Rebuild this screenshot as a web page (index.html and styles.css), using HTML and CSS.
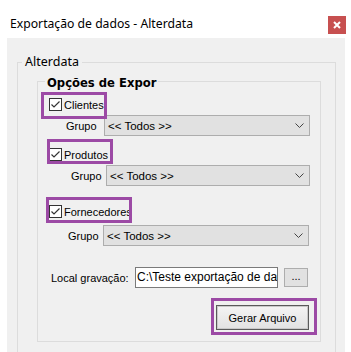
FILE: index.html
```html
<!DOCTYPE html>
<html lang="pt">
<head>
<meta charset="utf-8">
<title>Exportação de dados - Alterdata</title>
<link rel="stylesheet" href="styles.css">
</head>
<body>
<div class="titlebar">
  <span class="title">Exportação de dados - Alterdata</span>
  <span class="close"><svg width="8" height="8" viewBox="0 0 8 8"><path d="M1 1L7 7M7 1L1 7" stroke="#fff" stroke-width="2"/></svg></span>
</div>
<div class="window">
  <fieldset class="outer">
    <legend class="outer-legend">Alterdata</legend>
    <fieldset class="inner">
      <legend class="inner-legend">Opções de Expor</legend>

      <div class="check-row row-clientes">
        <label class="check"><span class="box"><svg width="13" height="13" viewBox="0 0 13 13"><rect x="0.5" y="0.5" width="12" height="12" fill="#fff" stroke="#333"/><polyline points="2.5,6.5 5,9 10.5,3.5" fill="none" stroke="#333" stroke-width="1.2"/></svg></span>Clientes</label>
        <span class="hl hl-clientes"></span>
      </div>
      <div class="grupo grupo-1">
        <span class="glabel">Grupo</span>
        <div class="select"><span>&lt;&lt; Todos &gt;&gt;</span><svg width="9" height="5" viewBox="0 0 9 5"><polyline points="0.5,0.5 4.5,4.5 8.5,0.5" fill="none" stroke="#444"/></svg></div>
      </div>

      <div class="check-row row-produtos">
        <label class="check"><span class="box"><svg width="13" height="13" viewBox="0 0 13 13"><rect x="0.5" y="0.5" width="12" height="12" fill="#fff" stroke="#333"/><polyline points="2.5,6.5 5,9 10.5,3.5" fill="none" stroke="#333" stroke-width="1.2"/></svg></span>Produtos</label>
        <span class="hl hl-produtos"></span>
      </div>
      <div class="grupo grupo-2">
        <span class="glabel">Grupo</span>
        <div class="select"><span>&lt;&lt; Todos &gt;&gt;</span><svg width="9" height="5" viewBox="0 0 9 5"><polyline points="0.5,0.5 4.5,4.5 8.5,0.5" fill="none" stroke="#444"/></svg></div>
      </div>

      <div class="check-row row-fornecedores">
        <label class="check"><span class="box"><svg width="13" height="13" viewBox="0 0 13 13"><rect x="0.5" y="0.5" width="12" height="12" fill="#fff" stroke="#333"/><polyline points="2.5,6.5 5,9 10.5,3.5" fill="none" stroke="#333" stroke-width="1.2"/></svg></span>Fornecedores</label>
        <span class="hl hl-fornecedores"></span>
      </div>
      <div class="grupo grupo-3">
        <span class="glabel">Grupo</span>
        <div class="select"><span>&lt;&lt; Todos &gt;&gt;</span><svg width="9" height="5" viewBox="0 0 9 5"><polyline points="0.5,0.5 4.5,4.5 8.5,0.5" fill="none" stroke="#444"/></svg></div>
      </div>

      <div class="local">
        <span class="local-label">Local gravação:</span>
        <div class="path-input">C:\Teste exportação de dados</div>
        <div class="dots">...</div>
      </div>

      <div class="actions">
        <div class="btn-wrap">
          <button class="btn">Gerar Arquivo</button>
          <span class="hl hl-btn"></span>
        </div>
      </div>
    </fieldset>
  </fieldset>
</div>
</body>
</html>
```
FILE: styles.css
```css
* { box-sizing: border-box; }
html, body {
  margin: 0;
  padding: 0;
  background: #fff;
}
body {
  width: 351px;
  height: 352px;
  overflow: hidden;
  font-family: "Liberation Sans", Arial, sans-serif;
  font-size: 11px;
  color: #000;
}
.titlebar {
  height: 38px;
  display: flex;
  align-items: flex-start;
  padding: 0 5px 0 10px;
}
.title {
  margin-top: 16px;
  font-family: "Noto Sans", sans-serif;
  font-size: 12.2px;
  line-height: 16px;
}
.close {
  margin-left: auto;
  margin-top: 16px;
  width: 18px;
  height: 18px;
  background: #c75050;
  display: flex;
  align-items: center;
  justify-content: center;
}
.window {
  margin-left: 7px;
  width: 338px;
  height: 314px;
  background: #f0f0f0;
  padding: 16px 0 0 10px;
  overflow: hidden;
}
fieldset {
  margin: 0;
  min-width: 0;
}
.outer {
  width: 319px;
  height: 320px;
  border: 1px solid #dcdcdc;
  padding: 3px 0 0 4px;
}
.outer-legend {
  padding: 0 3px;
  font-family: "Noto Sans", sans-serif;
  font-size: 12.5px;
  line-height: 16px;
}
.inner {
  margin-left: 15px;
  width: 284px;
  border: 1px solid #dcdcdc;
  padding: 0 0 11px 0;
}
.inner-legend {
  margin-left: 7px;
  padding: 3px 2px 0;
  font-family: "DejaVu Sans", Verdana, sans-serif;
  font-weight: bold;
  font-size: 11.6px;
  line-height: 14px;
}
.check-row {
  position: relative;
  height: 21px;
  display: flex;
  align-items: center;
  padding-left: 11px;
}
.row-clientes { margin-top: 4px; }
.row-produtos { margin-top: 8px; }
.row-fornecedores { margin-top: 15px; }
.check {
  display: flex;
  align-items: center;
  gap: 2px;
  font-size: 11px;
}
.box {
  display: block;
  width: 13px;
  height: 13px;
}
.box svg { display: block; }
.hl {
  position: absolute;
  border: 3px solid #9c4aa5;
  pointer-events: none;
}
.hl-clientes { left: 3px; top: -2px; width: 66px; height: 27px; }
.hl-produtos { left: 9px; top: -5px; width: 66px; height: 25px; }
.hl-fornecedores { left: 8px; top: -4px; width: 86px; height: 26px; }
.grupo {
  display: flex;
  align-items: center;
  height: 21px;
}
.grupo-1 { padding-left: 28px; }
.grupo-2 { padding-left: 33px; }
.grupo-3 { padding-left: 30px; margin-top: 3px; }
.glabel { width: 38px; }
.grupo-2 .glabel { width: 35px; }
.grupo-3 .glabel { width: 35px; }
.select {
  height: 21px;
  width: 206px;
  background: #e1e1e1;
  border: 1px solid #adadad;
  display: flex;
  align-items: center;
  justify-content: space-between;
  padding: 0 5px 0 3px;
  font-size: 11.5px;
}
.grupo-2 .select { width: 204px; }
.select svg { display: block; }
.local {
  display: flex;
  align-items: center;
  margin-top: 21px;
  padding-left: 13px;
  height: 21px;
}
.local-label { width: 84px; }
.path-input {
  width: 143px;
  height: 21px;
  background: #fff;
  border: 1px solid #7a7a7a;
  padding: 0 1px;
  line-height: 19px;
  font-size: 12px;
  white-space: nowrap;
  overflow: hidden;
}
.dots {
  margin-left: 6px;
  width: 24px;
  height: 19px;
  border: 1px solid #adadad;
  background: #e1e1e1;
  text-align: center;
  line-height: 15px;
}
.actions {
  margin-top: 17px;
  display: flex;
  padding-left: 178px;
}
.btn-wrap { position: relative; }
.btn {
  display: block;
  width: 93px;
  height: 25px;
  margin: 0;
  padding: 0;
  font-family: "Liberation Sans", Arial, sans-serif;
  font-size: 11px;
  color: #000;
  border: 1px solid #5a5a5a;
  box-shadow: inset 0 0 0 1px #c9c9c9;
  background: linear-gradient(#f4f4f4, #e2e2e2);
}
.hl-btn { left: -5px; top: -7px; width: 106px; height: 37px; }
```
